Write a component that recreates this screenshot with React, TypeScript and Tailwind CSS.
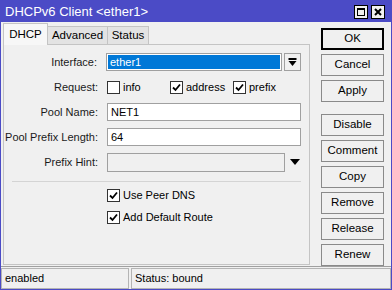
import React from 'react';

const FONT = { fontFamily: '"Liberation Sans", Arial, sans-serif' };

// Small square checkbox in the old Windows style
const Check: React.FC<{ checked?: boolean }> = ({ checked }) => (
  <span className="flex h-[13px] w-[13px] shrink-0 items-center justify-center border border-[#333333] bg-white">
    {checked && (
      <svg width="9" height="9" viewBox="0 0 9 9">
        <path d="M1 4.5 L3.5 7 L8 1.5" fill="none" stroke="#000" strokeWidth="1.8" />
      </svg>
    )}
  </span>
);

const Field: React.FC<{ label: string; children: React.ReactNode }> = ({ label, children }) => (
  <div className="flex h-[18px] items-center">
    <div className="w-[96px] whitespace-nowrap pr-[2px] text-right text-[#1a1a1a]">{label}</div>
    <div className="ml-[7px] flex flex-1 items-center">{children}</div>
  </div>
);

const SideButton: React.FC<{ label: string; primary?: boolean }> = ({ label, primary }) => (
  <button
    className={`flex h-[22px] w-[63px] items-center justify-center bg-[#f0f0f0] text-[11.5px] text-black ${
      primary ? 'border-2 border-black' : 'border border-[#8a8a8a]'
    }`}
  >
    {label}
  </button>
);

export default function App() {
  return (
    <div style={FONT} className="flex h-[290px] w-[392px] flex-col border border-[#4b4bc6] bg-[#f0f0f0] text-[11px] text-black">
      {/* Title bar */}
      <div className="flex h-[21px] items-center bg-[#4b4bc6] pl-[4px] pr-[6px] text-[13px] text-white">
        <span className="flex-1">DHCPv6 Client &lt;ether1&gt;</span>
        <div className="flex gap-[3px]">
          <span className="flex h-[14px] w-[14px] items-center justify-center border border-black bg-[#f0f0f0]">
            <span className="h-[8px] w-[8px] border border-t-2 border-black" />
          </span>
          <span className="flex h-[14px] w-[14px] items-center justify-center border border-black bg-[#f0f0f0]">
            <svg width="8" height="8" viewBox="0 0 8 8">
              <path d="M1 1 L7 7 M7 1 L1 7" stroke="#000" strokeWidth="2" />
            </svg>
          </span>
        </div>
      </div>

      {/* Body */}
      <div className="flex flex-1 pl-[2px] pt-[1px]">
        <div className="flex w-[307px] flex-col">
          {/* Tabs */}
          <div className="flex h-[22px] items-end text-[11.5px]">
            <div className="relative z-10 flex h-[22px] w-[45px] items-center justify-center border border-b-0 border-[#c4c4c4] bg-[#f7f7f7]">
              DHCP
            </div>
            <div className="flex h-[19px] w-[60px] items-center justify-center border border-l-0 border-[#c4c4c4] bg-[#e3e3e3]">
              Advanced
            </div>
            <div className="flex h-[19px] w-[41px] items-center justify-center border border-l-0 border-[#c4c4c4] bg-[#e3e3e3]">
              Status
            </div>
          </div>

          {/* Tab panel */}
          <div className="-mt-px flex h-[221px] flex-col border border-[#c4c4c4] pt-[8px]">
            <div className="flex flex-col gap-[7px] pr-[8px]">
              <Field label="Interface:">
                <div className="flex h-[18px] w-[176px] items-center border border-[#a0a0a0] bg-white p-px">
                  <span className="flex h-full w-full items-center bg-[#0078d7] pl-[2px] text-white">ether1</span>
                </div>
                <div className="ml-[2px] flex h-[18px] w-[17px] items-center justify-center border border-[#a0a0a0] bg-[#f0f0f0]">
                  <svg width="9" height="9" viewBox="0 0 9 9">
                    <rect x="0.5" y="0" width="8" height="2" fill="#000" />
                    <path d="M0.5 3 H8.5 L4.5 8 Z" fill="#000" />
                  </svg>
                </div>
              </Field>
              <Field label="Request:">
                <Check />
                <span className="ml-[3px] w-[47px]">info</span>
                <Check checked />
                <span className="ml-[3px] w-[47px]">address</span>
                <Check checked />
                <span className="ml-[3px]">prefix</span>
              </Field>
              <Field label="Pool Name:">
                <div className="flex h-[18px] w-[194px] items-center border border-[#a0a0a0] bg-white pl-[3px]">NET1</div>
              </Field>
              <Field label="Pool Prefix Length:">
                <div className="flex h-[18px] w-[194px] items-center border border-[#a0a0a0] bg-white pl-[3px]">64</div>
              </Field>
              <Field label="Prefix Hint:">
                <div className="h-[19px] w-[178px] border border-[#a0a0a0] bg-[#f0f0f0]" />
                <svg className="ml-[5px]" width="10" height="6" viewBox="0 0 10 6">
                  <path d="M0 0 H10 L5 6 Z" fill="#000" />
                </svg>
              </Field>
            </div>

            <div className="mx-[8px] mt-[10px] h-px bg-[#d4d4d4]" />

            <div className="ml-[103px] mt-[7px] flex flex-col gap-[9px]">
              <label className="flex h-[13px] items-center gap-[3px]">
                <Check checked />
                <span>Use Peer DNS</span>
              </label>
              <label className="flex h-[13px] items-center gap-[3px]">
                <Check checked />
                <span>Add Default Route</span>
              </label>
            </div>
          </div>
        </div>

        {/* Right button column */}
        <div className="ml-[11px] flex flex-col gap-[4px] pt-[5px]">
          <SideButton label="OK" primary />
          <SideButton label="Cancel" />
          <SideButton label="Apply" />
          <div className="h-[4px]" />
          <SideButton label="Disable" />
          <SideButton label="Comment" />
          <SideButton label="Copy" />
          <SideButton label="Remove" />
          <SideButton label="Release" />
          <SideButton label="Renew" />
        </div>
      </div>

      {/* Status bar */}
      <div className="flex h-[23px] gap-[2px] border-t border-[#a0a0a0] pt-px">
        <div className="flex h-[21px] w-[128px] items-center border border-[#b4b4b4] pl-[3px]">enabled</div>
        <div className="flex h-[21px] flex-1 items-center border border-[#b4b4b4] pl-[3px]">Status: bound</div>
      </div>
    </div>
  );
}
